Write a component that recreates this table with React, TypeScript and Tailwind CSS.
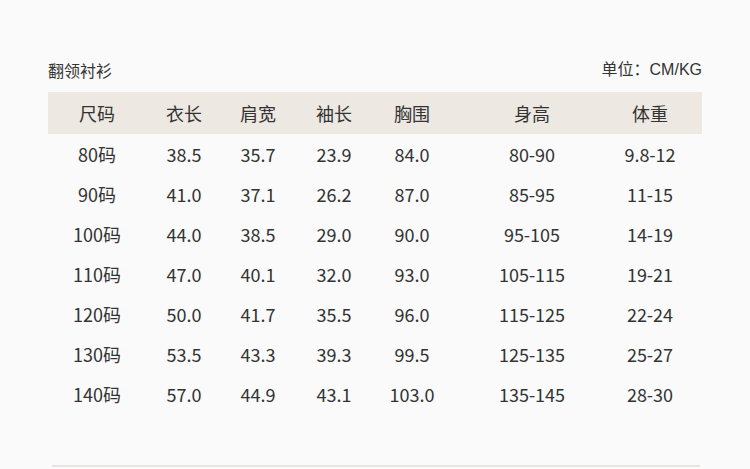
import React from "react";

const headers = ["尺码", "衣长", "肩宽", "袖长", "胸围", "身高", "体重"];

const rows = [
  ["80码", "38.5", "35.7", "23.9", "84.0", "80-90", "9.8-12"],
  ["90码", "41.0", "37.1", "26.2", "87.0", "85-95", "11-15"],
  ["100码", "44.0", "38.5", "29.0", "90.0", "95-105", "14-19"],
  ["110码", "47.0", "40.1", "32.0", "93.0", "105-115", "19-21"],
  ["120码", "50.0", "41.7", "35.5", "96.0", "115-125", "22-24"],
  ["130码", "53.5", "43.3", "39.3", "99.5", "125-135", "25-27"],
  ["140码", "57.0", "44.9", "43.1", "103.0", "135-145", "28-30"],
];

const cols = "grid grid-cols-[98px_76px_72px_80px_76px_164px_72px]";

const App = () => {
  return (
    <div
      className="w-[750px] h-[469px] bg-[#fafafa] text-[#333] flex flex-col"
      style={{ fontFamily: '"Noto Sans CJK SC", "Noto Sans", sans-serif' }}
    >
      <div className="mx-[48px] mt-[59px] flex justify-between items-end h-[22px] text-[16px] leading-[22px]">
        <span>翻领衬衫</span>
        <span>
          单位：
          <span style={{ fontFamily: '"Liberation Sans", Arial, sans-serif' }}>CM/KG</span>
        </span>
      </div>
      <div className="mx-[48px] mt-[11px] bg-[#ede8e2] h-[42px]">
        <div className={`${cols} h-full items-center text-[18px]`}>
          {headers.map((h) => (
            <div key={h} className="text-center">
              {h}
            </div>
          ))}
        </div>
      </div>
      <div className="mx-[48px]">
        {rows.map((r) => (
          <div key={r[0]} className={`${cols} h-[40px] items-center text-[18px]`}>
            {r.map((c, i) => (
              <div key={i} className="text-center">
                {c}
              </div>
            ))}
          </div>
        ))}
      </div>
      <div className="flex-1" />
      <div className="ml-[52px] w-[648px] h-[2px] bg-[#e8e4df] mb-[2px]" />
    </div>
  );
};

export default App;
